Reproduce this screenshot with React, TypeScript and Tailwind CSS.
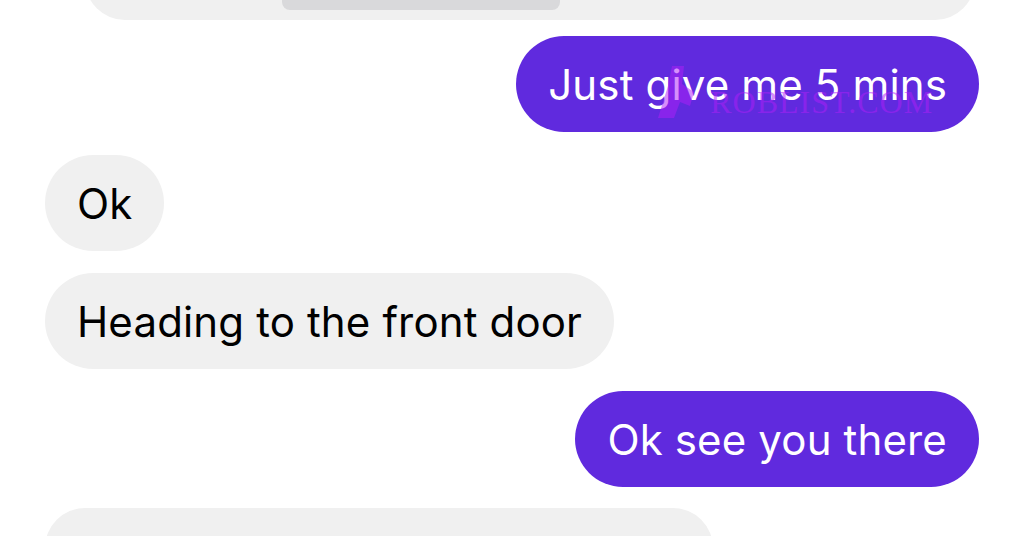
import React from "react";

const font = { fontFamily: "Inter, 'Noto Sans', sans-serif" };

function Them({ text }: { text: string }) {
  return (
    <div className="flex justify-start">
      <div className="h-[96px] rounded-[48px] bg-[#f0f0f0] px-[32px] flex items-center text-[42px] text-black tracking-[0.15px]">
        {text}
      </div>
    </div>
  );
}

function Me({ text, children }: { text: string; children?: React.ReactNode }) {
  return (
    <div className="flex justify-end">
      <div className="relative h-[96px] rounded-[48px] bg-[#602ade] px-[32px] flex items-center text-[42px] text-white tracking-[0.15px]">
        <span className="relative">{text}</span>
        {children}
      </div>
    </div>
  );
}

export default function App() {
  return (
    <div className="w-[1024px] h-[536px] overflow-hidden bg-white" style={font}>
      <div className="flex flex-col pl-[45px] pr-[45px]">
        <div className="mt-[-76px] ml-[40px] mr-[4px] h-[96px] rounded-[40px] bg-[#f0f0f0] flex justify-start">
          <div className="ml-[197px] mt-[66px] w-[278px] h-[20px] rounded-b-[8px] bg-[#d9d9db]" />
        </div>
        <div className="mt-[16px]">
          <Me text="Just give me 5 mins">
            <div className="absolute left-[138px] top-[26px] flex items-end gap-[4px] opacity-50 pointer-events-none">
              <svg width="52" height="58" viewBox="0 0 52 58">
                <path d="M4 56 L14 24 L18 4 L30 4 L28 22 L40 30 L36 44 L26 40 L20 56 Z" fill="#b020f8" />
              </svg>
              <span
                className="text-[32px] leading-[32px] text-[#b020f8] tracking-[1px] mb-[2px]"
                style={{ fontFamily: "'Liberation Serif', serif" }}
              >
                ROBLIST.COM
              </span>
            </div>
          </Me>
        </div>
        <div className="mt-[23px]">
          <Them text="Ok" />
        </div>
        <div className="mt-[22px]">
          <Them text="Heading to the front door" />
        </div>
        <div className="mt-[22px]">
          <Me text="Ok see you there" />
        </div>
        <div className="mt-[21px] mr-[266px] h-[96px] rounded-[40px] bg-[#f0f0f0]" />
      </div>
    </div>
  );
}
